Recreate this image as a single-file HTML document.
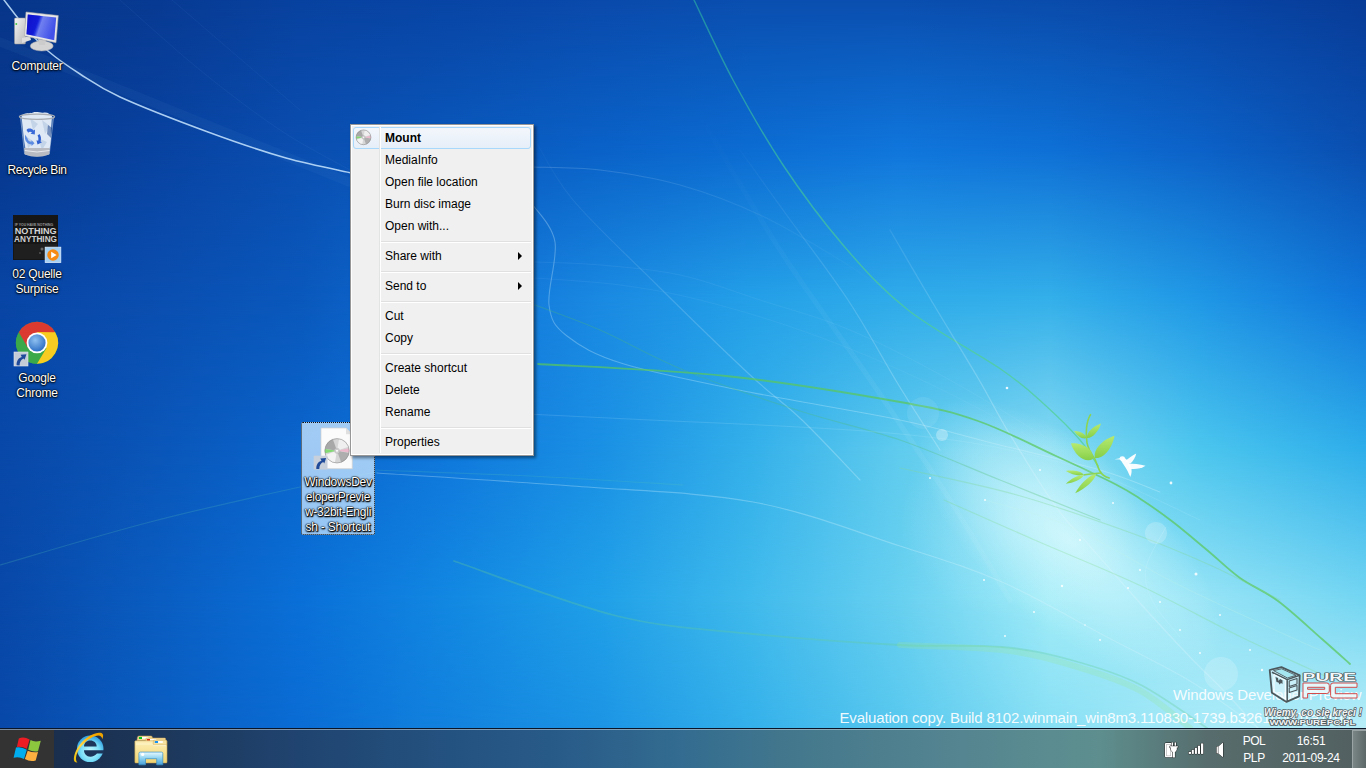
<!DOCTYPE html>
<html><head><meta charset="utf-8">
<style>
*{box-sizing:border-box}
html,body{margin:0;padding:0}
body{width:1366px;height:768px;overflow:hidden;position:relative;font-family:"Liberation Sans",sans-serif;background:#0a55b8}
#wall{position:absolute;left:0;top:0;width:1366px;height:728px;overflow:hidden;
background:linear-gradient(180deg, #0843a2 0%, #0a4fb2 35%, #0a5bc2 70%, #0b62c8 100%);}
#wall .bb{position:absolute;left:0;width:1366px}
#wall .g{position:absolute;border-radius:50%}
#lines{position:absolute;left:0;top:0}
.abs{position:absolute}
.ico{position:absolute;width:74px;text-align:center;color:#fff;font-size:12px;line-height:15px;letter-spacing:-0.2px;text-shadow:0 0 1px #000,0 0 1px #000,0 1px 2px #000,0 0 3px rgba(0,0,0,0.5)}
#menu{position:absolute;left:350px;top:124px;width:184px;height:332px;background:#f0f0f0;border:1px solid #979797;box-shadow:2px 2px 3px rgba(0,0,0,0.45)}
#menu .inner{position:absolute;left:0;top:0;right:0;bottom:0;border:1px solid #fff}
#menu .vsep{position:absolute;left:28px;top:2px;bottom:2px;width:2px;border-left:1px solid #e2e3e3;border-right:1px solid #fff}
.it{position:absolute;left:34px;font-size:12px;color:#000;height:22px;line-height:22px;white-space:nowrap}
.sep{position:absolute;left:30px;width:150px;height:2px;border-top:1px solid #e0e0e0;border-bottom:1px solid #fff}
.arr{position:absolute;left:167px;width:0;height:0;border-top:4px solid transparent;border-bottom:4px solid transparent;border-left:4px solid #000}
#hl{position:absolute;left:2px;top:2px;width:178px;height:22px;border:1px solid #a8d8fb;border-radius:3px;background:linear-gradient(#f3f7fc,#e6eef8)}
#taskbar{position:absolute;left:0;top:728px;width:1366px;height:40px;
background:linear-gradient(90deg,#182a48 0px,#1a2e4e 60px,#1c3658 150px,#204470 300px,#245280 450px,#285a88 550px,#336c90 683px,#44788c 800px,#548490 950px,#5a8c90 1050px,#5e8e8e 1100px,#5a7e7e 1150px,#576c6c 1210px,#525f60 1366px);border-top:1px solid #0a1628}
#taskbar:before{content:"";position:absolute;left:0;top:0;width:1366px;height:1px;background:rgba(200,215,225,0.55)}
.tray{position:absolute;color:#fff;font-size:12px;line-height:16px;text-align:center}
.wm{position:absolute;color:rgba(255,255,255,0.92);font-size:15px;line-height:18px;white-space:nowrap}
</style></head><body>
<div id="wall">
<div class="bb" style="top:0px;height:150px;background:linear-gradient(90deg,#07368a 0px,#083a92 150px,#0842a0 300px,#0845a5 450px,#0a4aac 600px,#0a4fb0 750px,#0a4fb0 900px,#0a4cac 1050px,#0845a5 1200px,#083c98 1366px)"></div>
<div class="bb" style="top:0px;height:150px;background:linear-gradient(90deg,#07388e 0px,#0842a0 150px,#0a4eb0 300px,#0a58bc 450px,#0a62c8 600px,#0c6cd2 750px,#1076dc 900px,#0e70d6 1050px,#0c62c8 1200px,#0a4fb0 1366px);-webkit-mask-image:linear-gradient(180deg,transparent,#000);mask-image:linear-gradient(180deg,transparent,#000)"></div>
<div class="bb" style="top:150px;height:150px;background:linear-gradient(90deg,#07388e 0px,#0842a0 150px,#0a4eb0 300px,#0a58bc 450px,#0a62c8 600px,#0c6cd2 750px,#1076dc 900px,#0e70d6 1050px,#0c62c8 1200px,#0a4fb0 1366px)"></div>
<div class="bb" style="top:150px;height:150px;background:linear-gradient(90deg,#0845a5 0px,#0a4eb0 150px,#0a58bc 300px,#1070d8 450px,#1a8ae2 600px,#24a0e8 750px,#30acea 900px,#34b0ea 1050px,#2098e6 1200px,#1076da 1366px);-webkit-mask-image:linear-gradient(180deg,transparent,#000);mask-image:linear-gradient(180deg,transparent,#000)"></div>
<div class="bb" style="top:300px;height:150px;background:linear-gradient(90deg,#0845a5 0px,#0a4eb0 150px,#0a58bc 300px,#1070d8 450px,#1a8ae2 600px,#24a0e8 750px,#30acea 900px,#34b0ea 1050px,#2098e6 1200px,#1076da 1366px)"></div>
<div class="bb" style="top:300px;height:150px;background:linear-gradient(90deg,#0848a8 0px,#0a55b8 150px,#0a65cc 300px,#1078dc 450px,#1a90e4 600px,#34b0ea 750px,#60ccee 900px,#88dcf2 1050px,#4cc6ee 1200px,#2eaeea 1366px);-webkit-mask-image:linear-gradient(180deg,transparent,#000);mask-image:linear-gradient(180deg,transparent,#000)"></div>
<div class="bb" style="top:450px;height:150px;background:linear-gradient(90deg,#0848a8 0px,#0a55b8 150px,#0a65cc 300px,#1078dc 450px,#1a90e4 600px,#34b0ea 750px,#60ccee 900px,#88dcf2 1050px,#4cc6ee 1200px,#2eaeea 1366px)"></div>
<div class="bb" style="top:450px;height:150px;background:linear-gradient(90deg,#0848a8 0px,#0a5cc0 150px,#0a70d8 300px,#1288e2 450px,#20a0e8 600px,#40baec 750px,#68d0f0 900px,#a0ecf8 1050px,#98e4f6 1200px,#74d6f2 1366px);-webkit-mask-image:linear-gradient(180deg,transparent,#000);mask-image:linear-gradient(180deg,transparent,#000)"></div>
<div class="bb" style="top:600px;height:128px;background:linear-gradient(90deg,#0848a8 0px,#0a5cc0 150px,#0a70d8 300px,#1288e2 450px,#20a0e8 600px,#40baec 750px,#68d0f0 900px,#a0ecf8 1050px,#98e4f6 1200px,#74d6f2 1366px)"></div>
<div class="bb" style="top:600px;height:128px;background:linear-gradient(90deg,#0848a8 0px,#0a5cc0 150px,#0a6cd4 300px,#1282de 450px,#1c94e4 600px,#34b0ea 750px,#58c8ee 900px,#88dff4 1050px,#a8eaf8 1200px,#b8eef8 1366px);-webkit-mask-image:linear-gradient(180deg,transparent,#000);mask-image:linear-gradient(180deg,transparent,#000)"></div>
<div class="g" style="left:880px;top:455px;width:380px;height:170px;background:radial-gradient(closest-side,rgba(225,252,254,0.75),rgba(205,246,252,0.4) 55%,rgba(190,240,250,0) 100%);transform:rotate(42deg)"></div><div class="g" style="left:900px;top:420px;width:240px;height:200px;background:radial-gradient(closest-side,rgba(210,248,253,0.35),rgba(190,240,250,0) 100%)"></div>
</div>

<svg id="lines" width="1366" height="728" viewBox="0 0 1366 728" style="position:absolute;left:0;top:0">
<defs>
<linearGradient id="leaf" x1="0" y1="0" x2="0" y2="1"><stop offset="0" stop-color="#b6ea70"/><stop offset="1" stop-color="#86cf4a"/></linearGradient>
</defs>
<defs>
<linearGradient id="fadeW" gradientUnits="userSpaceOnUse" x1="0" y1="100" x2="0" y2="450"><stop offset="0" stop-color="#e0f6ff" stop-opacity="0.05"/><stop offset="1" stop-color="#e0f6ff" stop-opacity="0.55"/></linearGradient>
<linearGradient id="fadeW2" gradientUnits="userSpaceOnUse" x1="0" y1="130" x2="0" y2="420"><stop offset="0" stop-color="#e0f6ff" stop-opacity="0"/><stop offset="1" stop-color="#e0f6ff" stop-opacity="0.28"/></linearGradient>
<linearGradient id="fadeW3" gradientUnits="userSpaceOnUse" x1="0" y1="110" x2="0" y2="450"><stop offset="0" stop-color="#e0f6ff" stop-opacity="0"/><stop offset="1" stop-color="#e0f6ff" stop-opacity="0.07"/></linearGradient>
<linearGradient id="fadeH" gradientUnits="userSpaceOnUse" x1="533" y1="0" x2="900" y2="0"><stop offset="0" stop-color="#d0ecff" stop-opacity="0.2"/><stop offset="1" stop-color="#d0ecff" stop-opacity="0"/></linearGradient>
<linearGradient id="fadeT" gradientUnits="userSpaceOnUse" x1="0" y1="0" x2="0" y2="300"><stop offset="0" stop-color="#30c0a0" stop-opacity="0.55"/><stop offset="1" stop-color="#50d090" stop-opacity="0.7"/></linearGradient>
</defs>
<g fill="none" stroke-linecap="round">
<path d="M0.0,42.0 C17.3,48.8 60.7,65.7 104.0,83.0 C147.3,100.3 219.2,129.5 260.0,146.0 C300.8,162.5 334.2,176.0 349.0,182.0" stroke="rgba(140,190,240,0.05)" stroke-width="9"/>
<path d="M4.0,0.0 C7.7,4.7 18.7,19.5 26.0,28.0 C33.3,36.5 39.0,43.3 48.0,51.0 C57.0,58.7 68.0,66.3 80.0,74.0 C92.0,81.7 98.7,87.3 120.0,97.0 C141.3,106.7 180.3,121.8 208.0,132.0 C235.7,142.2 262.0,151.2 286.0,158.0 C310.0,164.8 341.0,170.5 352.0,173.0" stroke="rgba(200,230,255,0.85)" stroke-width="1.5"/>
<path d="M120.0,0.0 C133.3,11.7 173.3,48.3 200.0,70.0 C226.7,91.7 255.0,113.3 280.0,130.0 C305.0,146.7 338.3,163.3 350.0,170.0" stroke="rgba(120,170,235,0.08)" stroke-width="1"/>
<path d="M172.0,0.0 C181.7,8.3 208.7,31.7 230.0,50.0 C251.3,68.3 288.3,100.0 300.0,110.0" stroke="rgba(120,170,235,0.07)" stroke-width="1"/>
<path d="M694.0,0.0 C700.5,13.3 718.2,52.5 733.0,80.0 C747.8,107.5 764.7,137.5 783.0,165.0 C801.3,192.5 822.2,220.8 843.0,245.0 C863.8,269.2 881.5,289.2 908.0,310.0 C934.5,330.8 979.2,354.2 1002.0,370.0 C1024.8,385.8 1032.0,393.3 1045.0,405.0 C1058.0,416.7 1071.2,429.8 1080.0,440.0 C1088.8,450.2 1095.0,461.7 1098.0,466.0" stroke="url(#fadeT)" stroke-width="1.4"/>
<path d="M740.0,150.0 C747.2,160.0 765.0,185.0 783.0,210.0 C801.0,235.0 828.8,271.0 848.0,300.0 C867.2,329.0 882.7,359.0 898.0,384.0 C913.3,409.0 933.0,439.0 940.0,450.0" stroke="url(#fadeW2)" stroke-width="1.2"/>
<path d="M890.0,230.0 C896.8,241.7 916.3,275.3 931.0,300.0 C945.7,324.7 965.0,355.8 978.0,378.0 C991.0,400.2 996.0,411.5 1009.0,433.0 C1022.0,454.5 1042.8,488.5 1056.0,507.0 C1069.2,525.5 1074.2,528.2 1088.0,544.0 C1101.8,559.8 1122.0,583.2 1139.0,602.0 C1156.0,620.8 1175.8,642.2 1190.0,657.0 C1204.2,671.8 1212.7,679.2 1224.0,691.0 C1235.3,702.8 1252.3,721.8 1258.0,728.0" stroke="url(#fadeW2)" stroke-width="1.3"/>
<path d="M700.0,115.0 C713.3,137.5 751.2,205.2 780.0,250.0 C808.8,294.8 844.7,342.3 873.0,384.0 C901.3,425.7 927.2,464.0 950.0,500.0 C972.8,536.0 1000.0,583.3 1010.0,600.0" stroke="url(#fadeW3)" stroke-width="5"/>
<path d="M535.0,140.0 C541.3,150.0 553.0,176.2 573.0,200.0 C593.0,223.8 625.7,254.0 655.0,283.0 C684.3,312.0 724.5,351.2 749.0,374.0 C773.5,396.8 783.5,402.3 802.0,420.0 C820.5,437.7 850.3,470.0 860.0,480.0" stroke="url(#fadeW2)" stroke-width="1.1"/>
<path d="M533.0,167.0 C544.2,167.5 575.5,167.0 600.0,170.0 C624.5,173.0 653.3,177.5 680.0,185.0 C706.7,192.5 733.3,202.5 760.0,215.0 C786.7,227.5 816.7,245.8 840.0,260.0 C863.3,274.2 890.0,293.3 900.0,300.0" stroke="url(#fadeH)" stroke-width="1.1"/>
<path d="M533.0,205.0 C536.7,211.2 552.3,225.3 555.0,242.0 C557.7,258.7 547.0,289.3 549.0,305.0 C551.0,320.7 554.5,326.2 567.0,336.0 C579.5,345.8 593.7,354.7 624.0,364.0 C654.3,373.3 703.0,382.7 749.0,392.0 C795.0,401.3 858.2,411.2 900.0,420.0 C941.8,428.8 966.7,436.7 1000.0,445.0 C1033.3,453.3 1073.3,462.2 1100.0,470.0 C1126.7,477.8 1150.0,488.3 1160.0,492.0" stroke="rgba(215,245,255,0.3)" stroke-width="1.1"/>
<path d="M535.0,262.0 C545.8,262.5 575.8,262.8 600.0,265.0 C624.2,267.2 653.3,269.2 680.0,275.0 C706.7,280.8 731.7,290.8 760.0,300.0 C788.3,309.2 818.3,316.7 850.0,330.0 C881.7,343.3 916.7,361.7 950.0,380.0 C983.3,398.3 1033.3,430.0 1050.0,440.0" stroke="rgba(190,230,255,0.08)" stroke-width="1"/>
<path d="M535.0,278.0 C549.2,279.2 592.5,281.3 620.0,285.0 C647.5,288.7 670.0,292.5 700.0,300.0 C730.0,307.5 766.7,318.3 800.0,330.0 C833.3,341.7 866.7,355.0 900.0,370.0 C933.3,385.0 966.7,401.7 1000.0,420.0 C1033.3,438.3 1083.3,470.0 1100.0,480.0" stroke="rgba(190,230,255,0.07)" stroke-width="1"/>
<path d="M538.0,364.0 C569.3,366.0 665.7,369.7 726.0,376.0 C786.3,382.3 858.0,394.5 900.0,402.0 C942.0,409.5 952.0,412.0 978.0,421.0 C1004.0,430.0 1033.2,445.5 1056.0,456.0 C1078.8,466.5 1100.7,476.7 1115.0,484.0 C1129.3,491.3 1132.3,493.7 1142.0,500.0 C1151.7,506.3 1162.2,513.7 1173.0,522.0 C1183.8,530.3 1195.8,540.7 1207.0,550.0 C1218.2,559.3 1228.2,569.5 1240.0,578.0 C1251.8,586.5 1264.3,590.8 1278.0,601.0 C1291.7,611.2 1310.0,628.5 1322.0,639.0 C1334.0,649.5 1345.3,659.8 1350.0,664.0" stroke="rgba(90,200,90,0.72)" stroke-width="1.8"/>
<path d="M535.0,305.0 C545.8,309.2 574.8,319.0 600.0,330.0 C625.2,341.0 652.7,357.5 686.0,371.0 C719.3,384.5 764.3,399.5 800.0,411.0 C835.7,422.5 866.7,428.5 900.0,440.0 C933.3,451.5 966.7,466.7 1000.0,480.0 C1033.3,493.3 1083.3,513.3 1100.0,520.0" stroke="rgba(80,190,110,0.3)" stroke-width="1.2"/>
<path d="M377.0,471.0 C402.0,471.7 479.5,473.2 527.0,475.0 C574.5,476.8 616.5,477.8 662.0,482.0 C707.5,486.2 760.3,502.3 800.0,500.0 C839.7,497.7 883.3,473.3 900.0,468.0" stroke="rgba(100,200,140,0.0)" stroke-width="1"/>
<path d="M377.0,473.0 C409.5,475.2 509.3,481.2 572.0,486.0 C634.7,490.8 698.3,492.0 753.0,502.0 C807.7,512.0 858.5,532.7 900.0,546.0 C941.5,559.3 967.8,567.0 1002.0,582.0 C1036.2,597.0 1073.7,619.5 1105.0,636.0 C1136.3,652.5 1164.5,665.7 1190.0,681.0 C1215.5,696.3 1246.7,720.2 1258.0,728.0" stroke="rgba(215,245,255,0.3)" stroke-width="1.2"/>
<path d="M0.0,565.0 C25.0,557.8 100.0,535.0 150.0,522.0 C200.0,509.0 262.2,495.3 300.0,487.0 C337.8,478.7 364.2,474.5 377.0,472.0" stroke="rgba(90,200,180,0.22)" stroke-width="1.2"/>
<path d="M375.0,470.0 C400.8,471.0 478.7,473.5 530.0,476.0 C581.3,478.5 657.5,483.5 683.0,485.0" stroke="rgba(90,200,180,0.2)" stroke-width="1.2"/>
<path d="M454.0,561.0 C481.2,570.2 567.2,603.8 617.0,616.0 C666.8,628.2 705.8,629.2 753.0,634.0 C800.2,638.8 858.5,642.8 900.0,645.0 C941.5,647.2 973.5,644.5 1002.0,647.0 C1030.5,649.5 1048.2,653.8 1071.0,660.0 C1093.8,666.2 1116.3,672.7 1139.0,684.0 C1161.7,695.3 1195.7,720.7 1207.0,728.0" stroke="rgba(100,205,150,0.32)" stroke-width="1.8"/>
<path d="M900.0,645.0 C917.0,645.8 973.5,646.7 1002.0,650.0 C1030.5,653.3 1048.2,658.3 1071.0,665.0 C1093.8,671.7 1119.2,679.5 1139.0,690.0 C1158.8,700.5 1181.5,721.7 1190.0,728.0" stroke="rgba(150,230,150,0.25)" stroke-width="6"/>
<path d="M527.0,414.0 C547.5,415.0 607.8,418.0 650.0,420.0 C692.2,422.0 738.3,423.7 780.0,426.0 C821.7,428.3 863.3,430.3 900.0,434.0 C936.7,437.7 966.7,441.2 1000.0,448.0 C1033.3,454.8 1066.7,463.0 1100.0,475.0 C1133.3,487.0 1183.3,512.5 1200.0,520.0" stroke="rgba(200,240,255,0.15)" stroke-width="1"/>
<path d="M900.0,468.0 C919.5,472.5 978.0,484.0 1017.0,495.0 C1056.0,506.0 1101.5,522.2 1134.0,534.0 C1166.5,545.8 1187.7,555.0 1212.0,566.0 C1236.3,577.0 1268.7,594.3 1280.0,600.0" stroke="rgba(130,215,150,0.35)" stroke-width="1.2"/>
<path d="M944.0,500.0 C959.5,506.8 1004.5,526.8 1037.0,541.0 C1069.5,555.2 1105.0,569.0 1139.0,585.0 C1173.0,601.0 1209.7,621.7 1241.0,637.0 C1272.3,652.3 1312.7,670.3 1327.0,677.0" stroke="rgba(130,220,140,0.3)" stroke-width="1.2"/>
<path d="M985.0,500.0 C999.3,504.5 1039.7,513.3 1071.0,527.0 C1102.3,540.7 1139.0,564.8 1173.0,582.0 C1207.0,599.2 1250.5,618.7 1275.0,630.0 C1299.5,641.3 1312.5,646.7 1320.0,650.0" stroke="rgba(200,245,230,0.22)" stroke-width="1.1"/>
<path d="M1166.0,527.0 C1162.7,533.8 1148.2,555.5 1146.0,568.0 C1143.8,580.5 1147.3,590.5 1153.0,602.0 C1158.7,613.5 1175.5,631.2 1180.0,637.0" stroke="rgba(200,245,255,0.25)" stroke-width="1"/>
</g>
<!-- bokeh dots -->
<g fill="rgba(255,255,255,0.3)">
<circle cx="942" cy="435" r="6"/><circle cx="1156" cy="533" r="11" fill="rgba(255,255,255,0.2)"/><circle cx="1221" cy="674" r="17" fill="rgba(255,255,255,0.18)"/><circle cx="923" cy="413" r="16" fill="rgba(255,255,255,0.08)"/>
</g>
<g fill="rgba(255,255,255,0.85)">
<circle cx="1007" cy="388" r="1.3"/><circle cx="1171" cy="483" r="1.4"/><circle cx="1113" cy="503" r="1"/><circle cx="985" cy="500" r="1"/><circle cx="1040" cy="470" r="1"/>
<circle cx="1196" cy="574" r="1.5"/><circle cx="1160" cy="602" r="1"/><circle cx="1062" cy="586" r="1.2"/><circle cx="1250" cy="650" r="1"/><circle cx="1262" cy="670" r="1.2"/>
<circle cx="1100" cy="640" r="1"/><circle cx="1140" cy="570" r="1"/><circle cx="1080" cy="540" r="1"/><circle cx="1220" cy="615" r="1"/><circle cx="1034" cy="612" r="1"/><circle cx="1005" cy="636" r="1"/>
<circle cx="1180" cy="630" r="1"/><circle cx="1200" cy="653" r="1"/><circle cx="930" cy="478" r="1"/><circle cx="984" cy="580" r="1"/><circle cx="1128" cy="588" r="1"/><circle cx="1085" cy="625" r="0.8"/>
</g>
<!-- plant -->
<path d="M1090.5,414.7 C1086,422 1085.5,434 1087,442.8 C1088.5,450 1092,455 1095,459.2 C1097,464 1098,468 1099.8,471 C1102,475 1105,477 1109.2,478" fill="none" stroke="#8cd452" stroke-width="1.6" stroke-linecap="round"/>
<path d="M1083.4,475 C1089,474 1095,473.5 1101,473" fill="none" stroke="#8cd452" stroke-width="1.4"/>
<g fill="url(#leaf)">
<path d="M1086.4,438.0 C1086.2,434.1 1079.8,430.8 1074.0,431.0 C1076.9,436.1 1082.9,439.8 1086.4,438.0 Z"/>
<path d="M1087.0,438.0 C1092.1,438.7 1098.8,431.2 1101.0,423.5 C1093.4,426.0 1086.1,433.0 1087.0,438.0 Z"/>
<path d="M1093.0,459.0 C1094.5,449.9 1083.0,442.7 1071.0,443.4 C1074.4,455.0 1084.9,463.4 1093.0,459.0 Z"/>
<path d="M1095.0,458.0 C1103.3,459.4 1112.6,447.9 1114.5,435.8 C1102.8,439.3 1092.6,450.0 1095.0,458.0 Z"/>
<path d="M1083.4,474.5 C1081.3,471.3 1072.5,469.8 1065.9,471.0 C1071.5,474.7 1080.2,476.7 1083.4,474.5 Z"/>
<path d="M1083.4,475.6 C1079.6,474.3 1071.0,478.7 1065.9,483.8 C1073.1,483.2 1081.9,479.3 1083.4,475.6 Z"/>
<path d="M1096.0,474.0 C1090.3,474.1 1080.1,483.9 1075.2,493.2 C1084.9,489.1 1095.5,479.7 1096.0,474.0 Z"/>
</g>
<!-- bird -->
<g fill="rgba(255,255,255,0.95)">
<path d="M1114.5,459.3 L1120,458.2 L1120.5,459.6 Z"/>
<ellipse cx="1122.3" cy="458.6" rx="2.6" ry="2.3"/>
<path d="M1120.5,459.5 C1122,463 1125,466 1127,470 C1128.5,473 1129.5,475 1130.3,477 C1131.8,474 1132,470 1131,466.5 C1129.5,462.5 1126.5,459 1123.5,457.3 Z"/>
<path d="M1125,461.5 C1128,458.5 1132,455.5 1136.2,453.4 C1135.5,457 1133.5,460.5 1130.5,463.5 Z"/>
<path d="M1127.5,463.5 C1133,463.5 1139.5,464.2 1145.5,465.7 C1141.5,468.5 1135.5,469.5 1130,468.8 Z"/>
</g>

</svg>
<!-- watermark -->
<div class="wm" style="left:1173px;top:686px;letter-spacing:-0.1px">Windows Developer Preview</div>
<div class="wm" style="left:839.5px;top:709px;letter-spacing:-0.16px">Evaluation copy. Build 8102.winmain_win8m3.110830-1739.b3261c0d01a11b0</div>

<!-- purepc logo -->
<svg class="abs" style="left:1260px;top:660px" width="106" height="68" viewBox="1260 660 106 68">
<g stroke-linejoin="round">
<path d="M1269.7,670 L1281.4,667.1 L1299.7,675.2 L1299,696.4 L1286.5,701.9 L1271.9,692.7 Z" fill="rgba(235,248,252,0.55)" stroke="#4c585c" stroke-width="1.8"/>
<path d="M1271.9,672.2 L1287.2,679.6 L1287.2,701.5 M1287.2,679.6 L1299.7,675.2" fill="none" stroke="#4c585c" stroke-width="1.5"/>
<path d="M1273.5,670.6 L1281.6,668.8 L1296,675.3 L1287.4,678 Z" fill="rgba(150,225,235,0.7)" stroke="#4c585c" stroke-width="0.9"/>
<path d="M1274,674.5 L1285.3,680.3 L1285.3,698.8 L1274,691.5 Z" fill="none" stroke="#fff" stroke-width="0.9"/>
<path d="M1275.5,677 L1278,678 L1278.5,681 L1280,679 L1282.5,680.2 L1282.5,684 L1281,683 L1279.5,684.5 L1278.5,682.5 L1276.5,682 Z" fill="#4c585c"/>
<path d="M1289.2,681 L1297,678.5 L1297,684 L1289.2,686.5 Z M1289.2,688 L1297,685.5 L1297,690 L1289.2,692.5 Z" fill="none" stroke="#4c585c" stroke-width="1.1"/>
<text x="1302.6" y="680.7" font-family="Liberation Sans" font-size="10.5" font-weight="bold" fill="#f4f8f8" stroke="#4c585c" stroke-width="1.2" paint-order="stroke" textLength="53.4" lengthAdjust="spacingAndGlyphs">PURE</text>
<path fill-rule="evenodd" d="M1303,683 H1326.8 Q1329.3,683 1329.3,685.5 V691 Q1329.3,693.5 1326.8,693.5 H1307.6 V698 H1303 Z M1307.6,687.3 H1324.7 V689.3 H1307.6 Z" fill="rgba(240,250,252,0.85)" stroke="#d44c4c" stroke-width="1"/>
<path d="M1333,683 H1357 V687.3 H1335.3 V693.7 H1357 V698 H1333 Q1330.6,698 1330.6,695.5 V685.5 Q1330.6,683 1333,683 Z" fill="rgba(240,250,252,0.85)" stroke="#d44c4c" stroke-width="1"/>
<text x="1264" y="715.5" font-family="Liberation Sans" font-style="italic" font-size="11" font-weight="bold" fill="#f0f4f4" stroke="#505a5e" stroke-width="1.6" paint-order="stroke" textLength="98" lengthAdjust="spacingAndGlyphs">Wiemy, co się kręci !</text>
<text x="1269.5" y="725" font-family="Liberation Sans" font-size="6.5" font-weight="bold" fill="#f0f4f4" stroke="#505a5e" stroke-width="1.4" paint-order="stroke" textLength="86" lengthAdjust="spacingAndGlyphs">WWW.PUREPC.PL</text>
</g>
</svg>
<!-- desktop icons -->
<svg class="abs" style="left:0;top:0" width="80" height="400" viewBox="0 0 80 400">
<defs>
<linearGradient id="scr" x1="0" y1="0" x2="1" y2="0.3"><stop offset="0" stop-color="#1a1ad0"/><stop offset="0.45" stop-color="#2030e0"/><stop offset="0.55" stop-color="#7080f0"/><stop offset="1" stop-color="#4050e8"/></linearGradient>
<linearGradient id="silver" x1="0" y1="0" x2="1" y2="1"><stop offset="0" stop-color="#f4f4f4"/><stop offset="1" stop-color="#b8b8b8"/></linearGradient>
<linearGradient id="binbody" x1="0" y1="0" x2="1" y2="0"><stop offset="0" stop-color="#c8d8ec"/><stop offset="0.5" stop-color="#eef4fb"/><stop offset="1" stop-color="#b0c4dc"/></linearGradient>
<radialGradient id="cblue" cx="0.4" cy="0.35" r="0.7"><stop offset="0" stop-color="#8ec0f0"/><stop offset="1" stop-color="#2a6cc4"/></radialGradient>
</defs>
<!-- computer -->
<rect x="14.5" y="18" width="11" height="26" rx="1" fill="url(#silver)" stroke="#999" stroke-width="0.5"/>
<rect x="15.5" y="23" width="1.6" height="2" fill="#5c5"/>
<path d="M22,38 L30,36 L31,40 L22,43 Z" fill="#ddd"/>
<ellipse cx="41.7" cy="46" rx="11.5" ry="5" fill="#d4d4d4" stroke="#aaa" stroke-width="0.5"/>
<path d="M38,39 L46,40 L45,45 L39,45 Z" fill="#ccc"/>
<path d="M26,12 L58.3,15.6 L56,42.7 L24.5,36 Z" fill="#e8e8e8" stroke="#a8a8a8" stroke-width="0.6"/>
<path d="M27.8,14.5 L56.2,17.6 L54.2,40.2 L26.5,34.2 Z" fill="url(#scr)"/>
<path d="M27.8,14.5 L40,15.8 L33,35.2 L26.5,34.2 Z" fill="rgba(0,0,200,0.4)"/>
<!-- recycle bin -->
<path d="M20.5,117.5 L53.5,117.5 L49.3,154 Q37,158.5 24.6,154 Z" fill="rgba(120,160,210,0.45)" stroke="rgba(180,200,225,0.9)" stroke-width="0.6"/>
<path d="M21.5,116 C24,112 30,114 33,112.5 C37,111 41,113.5 44,112.5 C48,112 50,114.5 52,116 L50.8,131 C51.8,136 50.5,142 49.8,148 L48,152 L26,152 L24,140 C23,132 22.5,124 21.5,116 Z" fill="#dfe9f5"/>
<path d="M30,118 L38,124 L33,130 Z M42,120 L50,126 L45,134 Z M26,136 L34,142 L28,148 Z M38,138 L47,142 L42,150 Z" fill="#c4d4e8"/>
<path d="M48,125 L52,128 L51,138 L47,134 Z" fill="rgba(30,70,140,0.55)"/>
<path d="M26.5,130 C28,128 31.5,128 33.5,130.5 L35,129.5 L34.8,134.5 L30.5,133.8 L32,132.6 C30.8,131.5 29,131.6 28.2,132.8 Z" fill="#3a6ad8"/>
<path d="M25,134.5 L27.5,138.5 C27.8,140.5 29.5,141.8 31.5,141.8 L31.5,140.3 L34.5,143.3 L31.5,146 L31.5,144.3 C28.5,144.3 25.5,142 25,138.5 Z" fill="#4a7ee0" opacity="0.85"/>
<path d="M37.5,135.5 L39.5,134 C41,136 41.5,139 40.5,141.5 L42,142.3 L37.5,144.6 L36.5,140.2 L38.2,140.8 C38.7,139 38.5,137 37.5,135.5 Z" fill="#3060d0"/>
<path d="M24.2,148 L49.8,148 L49.2,154.5 Q37,159 24.8,154.5 Z" fill="#b8bcc2"/>
<path d="M24.8,150.5 Q37,153.5 49.5,150.5" fill="none" stroke="#e8eaee" stroke-width="1"/>
<ellipse cx="37" cy="116.8" rx="17.6" ry="2.6" fill="none" stroke="#a8acb2" stroke-width="1.2"/>
<!-- album -->
<rect x="13" y="215" width="45" height="45" fill="#161616"/>
<text x="14.7" y="226" font-family="Liberation Sans" font-weight="bold" font-size="3.6" fill="#9a9a9a" textLength="38.6" lengthAdjust="spacingAndGlyphs">IF YOU HAVE NOTHING</text>
<text x="14.7" y="234.4" font-family="Liberation Sans" font-weight="bold" font-size="9.6" fill="#d4d4d4" textLength="42" lengthAdjust="spacingAndGlyphs">NOTHING</text>
<text x="14" y="242.2" font-family="Liberation Sans" font-weight="bold" font-size="9.2" fill="#cfcfcf" textLength="43" lengthAdjust="spacingAndGlyphs">ANYTHING</text>
<rect x="14" y="244" width="43" height="15" fill="rgba(40,40,40,0.5)"/>
<circle cx="42" cy="249" r="1.5" fill="#666"/><circle cx="40" cy="253" r="1" fill="#555"/>
<rect x="45.2" y="247.2" width="15.6" height="15.2" fill="#a4d0f4" stroke="#dceeff" stroke-width="0.8"/>
<circle cx="53" cy="255" r="5.75" fill="#f78a12"/>
<path d="M51.2,251.8 L56.6,255 L51.2,258.2 Z" fill="#fff"/>
<!-- chrome -->
<circle cx="37" cy="342.8" r="21" fill="#3ba94a"/>
<path d="M37,342.8 L18.8,332.3 A21,21 0 0 1 55.2,332.3 Z" fill="#db3a30"/>
<path d="M37,342.8 L55.2,332.3 A21,21 0 0 1 37,363.8 Z" fill="#f8cc20"/>
<path d="M37,342.8 L37,363.8 A21,21 0 0 1 18.8,332.3 Z" fill="#3ba94a"/>
<path d="M37,332 L55.2,332.3 L46.5,348 Z" fill="#f8cc20"/>
<path d="M46.5,348 L37,363.8 L28,348 Z" fill="#3ba94a"/>
<path d="M28,348 L18.8,332.3 L37,332 Z" fill="#db3a30"/>
<circle cx="37" cy="342.8" r="10.4" fill="#fff"/>
<circle cx="37" cy="342.8" r="8.6" fill="url(#cblue)"/>
<rect x="14" y="352" width="14" height="14" fill="#c4ccd8" stroke="#e4e8ee" stroke-width="0.6"/>
<path d="M16.6,365.2 C16.4,360.8 18.6,357.8 21.8,357 L20.6,354.8 L26.4,354.2 L24.6,359.8 L23.5,358.4 C21.2,359.4 19.6,361.6 19.6,365.4 Z" fill="#1f4a9a"/>
</svg>
<div class="ico" style="left:0;top:59px">Computer</div>
<div class="ico" style="left:0;top:163px;letter-spacing:-0.4px">Recycle Bin</div>
<div class="ico" style="left:0;top:267px">02 Quelle<br>Surprise</div>
<div class="ico" style="left:0;top:371px">Google<br>Chrome</div>

<div class="abs" style="left:301px;top:422px;width:74px;height:113px;background:linear-gradient(180deg,rgba(205,232,255,0.78),rgba(198,228,255,0.75));border:1px dotted #1a1208;border-radius:2px"></div>
<svg class="abs" style="left:300px;top:420px" width="80" height="60" viewBox="300 420 80 60">
<defs>
<radialGradient id="disc" cx="0.5" cy="0.5" r="0.5"><stop offset="0" stop-color="#f0f0f0"/><stop offset="0.25" stop-color="#c8c8c8"/><stop offset="0.3" stop-color="#e8e8e8"/><stop offset="1" stop-color="#a8a8a8"/></radialGradient>
</defs>
<path d="M321,428 L346,428 L352.3,434.3 L352.3,468.7 L321,468.7 Z" fill="#fbfbfb" stroke="#d0d0d0" stroke-width="0.7"/>
<path d="M346,428 L346,434.3 L352.3,434.3 Z" fill="#e0e0e0"/>
<circle cx="337" cy="450.8" r="12.2" fill="#d6d6d6"/>
<path d="M337,450.8 L324.99,448.68 A12.2,12.2 0 0 1 332.83,439.34 Z" fill="#9c9c9c" opacity="0.8"/>
<path d="M337,450.8 L349.01,452.92 A12.2,12.2 0 0 1 341.17,462.26 Z" fill="#a4a4a4" opacity="0.8"/>
<path d="M337,450.8 L334.88,462.81 A12.2,12.2 0 0 1 325.54,454.97 Z" fill="#f6f6f6" opacity="0.9"/>
<path d="M337,450.8 L339.12,438.79 A12.2,12.2 0 0 1 348.46,446.63 Z" fill="#f2f2f2" opacity="0.9"/>
<path d="M337,450.8 L325.07,453.34 A12.2,12.2 0 0 1 324.92,449.10 Z" fill="#7ada6a" opacity="0.9"/>
<path d="M337,450.8 L348.93,448.26 A12.2,12.2 0 0 1 349.08,452.50 Z" fill="#f0b0c8" opacity="0.8"/>
<circle cx="337" cy="450.8" r="12.2" fill="none" stroke="#8c8c8c" stroke-width="0.6"/>
<circle cx="337" cy="450.8" r="2.56" fill="#e8e8e8" stroke="#a8a8a8" stroke-width="0.5"/>
<circle cx="337" cy="450.8" r="1.60" fill="#f8f8f8" stroke="#909090" stroke-width="0.4"/>
<rect x="313.7" y="455.7" width="13.8" height="13.8" fill="#c8d0dc"/>
<path d="M316.3,468.9 C316.1,464.5 318.3,461.5 321.5,460.7 L320.3,458.5 L326.1,457.9 L324.3,463.5 L323.2,462.1 C320.9,463.1 319.3,465.3 319.3,469.1 Z" fill="#1f4a9a"/>
</svg>
<div class="ico" style="left:302px;top:475px;width:72px;overflow:hidden;white-space:nowrap;letter-spacing:-0.25px;text-shadow:0 0 1px #000,0 0 1px #000,0 0 2px #000,0 1px 2px #000,1px 1px 1px #000">WindowsDev<br>eloperPrevie<br>w-32bit-Engli<br>sh - Shortcut</div>

<!-- context menu -->
<div id="menu"><div class="inner"></div>
<div id="hl"></div>
<div class="vsep"></div>
<svg class="abs" style="left:3px;top:3px" width="20" height="20" viewBox="354 128 20 20">
<defs><radialGradient id="mdisc" cx="0.5" cy="0.5" r="0.5"><stop offset="0" stop-color="#f0f0f0"/><stop offset="0.22" stop-color="#d0d0d0"/><stop offset="0.3" stop-color="#c4c4c4"/><stop offset="0.7" stop-color="#d8d8d8"/><stop offset="1" stop-color="#9a9a9a"/></radialGradient>
<linearGradient id="mdisc2" x1="0" y1="0" x2="1" y2="1"><stop offset="0" stop-color="#fafafa"/><stop offset="0.5" stop-color="#bcbcbc"/><stop offset="1" stop-color="#e8e8e8"/></linearGradient></defs>
<circle cx="363.5" cy="137.3" r="7.4" fill="#d6d6d6"/>
<path d="M363.5,137.3 L356.21,136.02 A7.4,7.4 0 0 1 360.97,130.35 Z" fill="#9c9c9c" opacity="0.8"/>
<path d="M363.5,137.3 L370.79,138.58 A7.4,7.4 0 0 1 366.03,144.25 Z" fill="#a4a4a4" opacity="0.8"/>
<path d="M363.5,137.3 L362.22,144.59 A7.4,7.4 0 0 1 356.55,139.83 Z" fill="#f6f6f6" opacity="0.9"/>
<path d="M363.5,137.3 L364.78,130.01 A7.4,7.4 0 0 1 370.45,134.77 Z" fill="#f2f2f2" opacity="0.9"/>
<path d="M363.5,137.3 L356.26,138.84 A7.4,7.4 0 0 1 356.17,136.27 Z" fill="#7ada6a" opacity="0.9"/>
<path d="M363.5,137.3 L370.74,135.76 A7.4,7.4 0 0 1 370.83,138.33 Z" fill="#f0b0c8" opacity="0.8"/>
<circle cx="363.5" cy="137.3" r="7.4" fill="none" stroke="#8c8c8c" stroke-width="0.6"/>
<circle cx="363.5" cy="137.3" r="1.76" fill="#e8e8e8" stroke="#a8a8a8" stroke-width="0.5"/>
<circle cx="363.5" cy="137.3" r="1.10" fill="#f8f8f8" stroke="#909090" stroke-width="0.4"/>
</svg>
<div class="it" style="top:2px;font-weight:bold">Mount</div>
<div class="it" style="top:24px">MediaInfo</div>
<div class="it" style="top:46px">Open file location</div>
<div class="it" style="top:68px">Burn disc image</div>
<div class="it" style="top:90px">Open with...</div>
<div class="sep" style="top:116px"></div>
<div class="it" style="top:120px">Share with</div>
<div class="arr" style="top:127px"></div>
<div class="sep" style="top:146px"></div>
<div class="it" style="top:150px">Send to</div>
<div class="arr" style="top:157px"></div>
<div class="sep" style="top:176px"></div>
<div class="it" style="top:180px">Cut</div>
<div class="it" style="top:202px">Copy</div>
<div class="sep" style="top:228px"></div>
<div class="it" style="top:232px">Create shortcut</div>
<div class="it" style="top:254px">Delete</div>
<div class="it" style="top:276px">Rename</div>
<div class="sep" style="top:302px"></div>
<div class="it" style="top:306px">Properties</div>
</div>

<!-- taskbar -->
<div id="taskbar">
<div class="abs" style="left:0;top:1px;width:54px;height:38px;background:#333333"></div>
<svg class="abs" style="left:0;top:0" width="180" height="40" viewBox="0 728 180 40">
<defs>
<radialGradient id="ieb" cx="0.45" cy="0.4" r="0.6"><stop offset="0" stop-color="#c8f0ff"/><stop offset="0.5" stop-color="#48c0f0"/><stop offset="1" stop-color="#1a78c8"/></radialGradient>
<linearGradient id="ring" x1="0" y1="0" x2="1" y2="1"><stop offset="0" stop-color="#ffe070"/><stop offset="1" stop-color="#c89010"/></linearGradient>
<linearGradient id="fold" x1="0" y1="0" x2="0" y2="1"><stop offset="0" stop-color="#fbe6a8"/><stop offset="1" stop-color="#e8c870"/></linearGradient>
<linearGradient id="fblue" x1="0" y1="0" x2="0" y2="1"><stop offset="0" stop-color="#d0f0ff"/><stop offset="1" stop-color="#5ab0e0"/></linearGradient>
</defs>
<!-- windows flag -->
<path d="M18.8,737.5 Q23.5,735 29.6,738.4 L26.8,747.8 Q22.1,745.2 16.9,745.9 Z" fill="#ec1c24"/>
<path d="M30.5,739.1 Q34.3,741.3 40.8,739.8 L38,750.2 Q33.3,751.2 28.2,748.8 Z" fill="#8cc63f"/>
<path d="M16,746.6 Q21.1,745.4 26.8,748.8 L24,758.1 Q19.3,755.3 13.6,756.7 Z" fill="#00aeef"/>
<path d="M27.7,749.7 Q32.4,751.8 38,751.1 L35.7,759.5 Q30,761.2 24.9,758.1 Z" fill="#fbb040"/>
<!-- IE -->
<defs>
<radialGradient id="ieb2" cx="0.5" cy="0.6" r="0.55"><stop offset="0" stop-color="#c8f8ff"/><stop offset="0.65" stop-color="#78def8"/><stop offset="1" stop-color="#3aa8e4"/></radialGradient>
<linearGradient id="ring2" x1="0" y1="1" x2="1" y2="0"><stop offset="0" stop-color="#e8b800"/><stop offset="0.4" stop-color="#ffd84a"/><stop offset="0.7" stop-color="#ffb000"/><stop offset="1" stop-color="#e8a000"/></linearGradient>
</defs>
<circle cx="90.2" cy="747.8" r="13.3" fill="url(#ieb2)"/>
<path d="M84,745.5 L96.6,745.5 C96.6,741.8 93.8,739.6 90.3,739.6 C86.8,739.6 84,741.8 84,745.5 Z" fill="#1d3559"/>
<path d="M84,749.3 L104,749.3 L104,752.6 L97,752.6 C95.4,754.6 93,755.7 90.3,755.7 C86.6,755.7 84,752.9 84,749.3 Z" fill="#1d3559"/>
<path d="M74.5,760.5 C72.5,757 75.5,748 82,741 C88.5,734 97,730.5 101.5,732 C103.5,732.8 103.6,735.2 102.3,738.2 C101.8,735.8 100.5,734.6 98.5,734.6 C94,734.6 87.5,738.5 82.5,744 C77,750 75,756.5 76.5,760.2 Q76.8,761 77.5,761.4 Q75.5,761.5 74.5,760.5 Z" fill="url(#ring2)"/>
<!-- explorer folder -->
<defs>
<linearGradient id="fold2" x1="0" y1="0" x2="0" y2="1"><stop offset="0" stop-color="#fdf0b8"/><stop offset="1" stop-color="#f0d270"/></linearGradient>
<linearGradient id="dock" x1="0" y1="0" x2="0" y2="1"><stop offset="0" stop-color="#e8faff"/><stop offset="0.5" stop-color="#8ad0f0"/><stop offset="1" stop-color="#4aa0d8"/></linearGradient>
</defs>
<path d="M137,739.5 L137.5,736 Q138,735 139,735 L151,735 Q152,735 152.3,736 L152.5,739.5 Z" fill="#f4dc98" stroke="#c8a050" stroke-width="0.5"/>
<rect x="138.9" y="735.9" width="3.1" height="2.1" fill="#10c020"/><rect x="142" y="736" width="6.3" height="1.7" fill="#fff"/>
<path d="M145.5,741 L145.8,737.8 Q146,737 147,737 L164.8,737 Q165.6,737 165.6,738 L165.8,741 Z" fill="#f4dc98" stroke="#c8a050" stroke-width="0.5"/>
<rect x="146.9" y="738" width="3.1" height="1.8" fill="#e02818"/><rect x="150" y="738.1" width="6.3" height="1.6" fill="#fff"/>
<path d="M134.9,740.5 Q134.9,739.8 135.7,739.8 L166.2,739.8 Q167,739.8 167,740.6 L167,761.2 Q167,761.9 166.2,761.9 L135.7,761.9 Q134.9,761.9 134.9,761.2 Z" fill="url(#fold2)" stroke="#c8a450" stroke-width="0.6"/>
<path d="M153,744 L153.4,740 Q153.6,739.1 154.5,739.1 L165.8,739.1 Q166.6,739.1 166.6,740 L166.6,744 Z" fill="#f6e2a0" stroke="#c8a050" stroke-width="0.5"/>
<rect x="154.8" y="740" width="3.3" height="2" fill="#1890f0"/><rect x="158.1" y="740.1" width="4.7" height="1.8" fill="#fff"/>
<path d="M136,743 L152.5,743 L153.4,744.6 L166,744.6" fill="none" stroke="#fff8d8" stroke-width="0.8"/>
<path d="M138.9,752.5 Q138.9,751.1 140.3,751.1 L161.4,751.1 Q162.8,751.1 162.8,752.5 L162.8,763.8 L156.7,763.8 L156.7,757.7 L145.5,757.7 L145.5,763.8 L138.9,763.8 Z" fill="url(#dock)" stroke="#3a90c8" stroke-width="0.7"/>
<circle cx="142.7" cy="753.4" r="1.6" fill="#fff"/>
</svg>
<!-- tray icons -->
<svg class="abs" style="left:1150px;top:0" width="90" height="40" viewBox="1150 728 90 40">
<g stroke="#1a1a1a" stroke-width="0.9" stroke-linejoin="round" fill="#fff" paint-order="stroke">
<path d="M1166,741.9 L1171,741.9 L1172.8,743.5 L1172.8,756.2 L1166,756.2 Q1164.9,756.2 1164.9,755 L1164.9,743 Q1164.9,741.9 1166,741.9 Z"/>
<path d="M1166.6,743.6 L1170.5,743.6 L1170.5,754.6 L1166.6,754.6 Z" fill="#fff" stroke="#444" stroke-width="0.5"/>
<rect x="1171.6" y="741.4" width="1.4" height="3.8"/><rect x="1174.6" y="741.4" width="1.4" height="3.8"/>
<path d="M1169.7,745.2 L1177.9,745.2 L1177.9,746.6 L1176.8,746.6 L1176.8,748.5 Q1176.3,750.9 1174.9,750.9 L1174.9,756.6 L1172.8,756.6 L1172.8,750.9 Q1171.4,750.9 1170.9,748.5 L1170.9,746.6 L1169.7,746.6 Z"/>
<rect x="1188.7" y="750.9" width="2.3" height="2"/>
<rect x="1191.8" y="748.8" width="2" height="4.1"/>
<rect x="1194.9" y="746.8" width="2" height="6.1"/>
<rect x="1197.9" y="744.7" width="2.1" height="8.2"/>
<rect x="1201" y="742.4" width="2.3" height="10.5"/>
<rect x="1216.6" y="745.5" width="1.8" height="6.9"/>
<path d="M1218.4,745.5 L1223,741.6 L1223,756.2 L1218.4,752.4 Z"/>
</g>
</svg>
<div class="tray" style="left:1234px;top:4px;width:40px;letter-spacing:-0.5px">POL</div>
<div class="tray" style="left:1234px;top:21px;width:40px;letter-spacing:-0.4px">PLP</div>
<div class="tray" style="left:1276px;top:4px;width:70px;letter-spacing:-0.3px">16:51</div>
<div class="tray" style="left:1276px;top:21px;width:70px;letter-spacing:-0.3px">2011-09-24</div>
<div class="abs" style="left:1352px;top:1px;width:14px;height:39px;border:1px solid #9aa4a4;border-right:none;background:linear-gradient(90deg,#7a8686,#5c6868)"></div>
</div>
</body></html>
